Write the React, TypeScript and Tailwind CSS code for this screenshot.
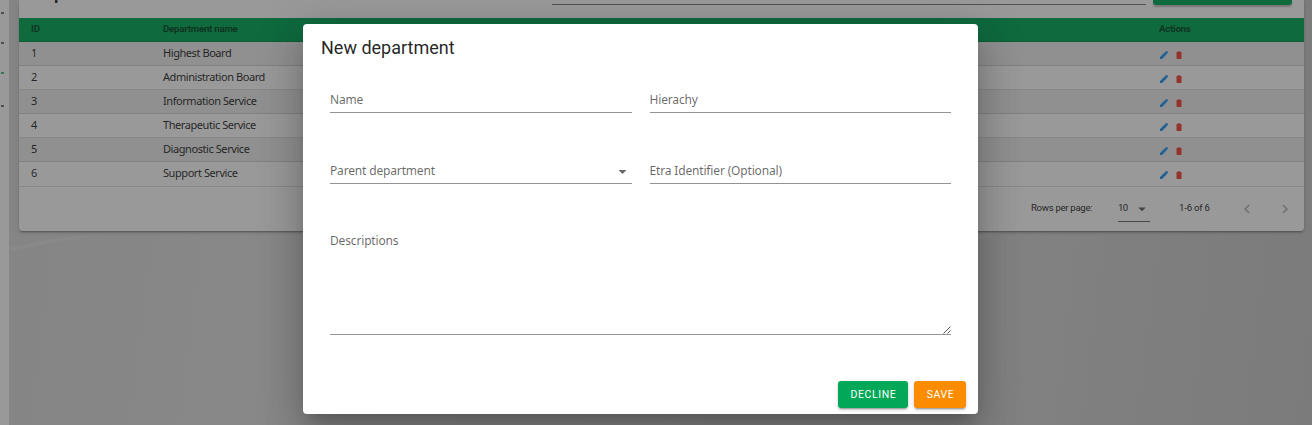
import React from "react";

const departments = [
  "Highest Board",
  "Administration Board",
  "Information Service",
  "Therapeutic Service",
  "Diagnostic Service",
  "Support Service",
];

function Icon({ d, className }: { d: string; className: string }) {
  return (
    <svg viewBox="0 0 24 24" className={className} fill="currentColor" aria-hidden="true">
      <path d={d} />
    </svg>
  );
}

const PENCIL =
  "M21.2,7.3C22,6.5 22,5.4 21.2,4.7L19.3,2.8C18.5,2 17.4,2 16.7,2.8L14.9,4.6L19.4,9.1M2.5,16.8V21.5H7.2L19.1,9.5L14.5,4.9L2.5,16.8Z";
const TRASH = "M18,4.5H15L14.2,3H9.8L9,4.5H6V6.4H18M6,6.6V19.6A2,2 0 0,0 8,21.4H16A2,2 0 0,0 18,19.6V6.6H6Z";
const LEFT = "M15.41,16.58L10.83,12L15.41,7.41L14,6L8,12L14,18L15.41,16.58Z";
const RIGHT = "M8.59,16.58L13.17,12L8.59,7.41L10,6L16,12L10,18L8.59,16.58Z";
const DOWN = "M7,10L12,15L17,10H7Z";

function Sidebar() {
  return (
    <div className="h-full w-[9px] shrink-0 bg-white pt-[12px]">
      <div className="ml-px h-[2px] w-[3px] bg-[#777]" />
      <div className="ml-px mt-[28px] h-[2px] w-[3px] bg-[#777]" />
      <div className="ml-px mt-[28px] h-[2px] w-[3px] bg-[#4dbf88]" />
      <div className="ml-px mt-[31px] h-[2px] w-[3px] bg-[#777]" />
    </div>
  );
}

function Toolbar() {
  return (
    <div className="flex h-[18px] items-start overflow-hidden">
      <div className="ml-[11px] mt-[-21px] w-[522px] font-['Roboto',sans-serif] text-[20px] leading-[26px] font-medium text-black/87">
        Departments
      </div>
      <div className="h-[5px] w-[594px] border-b border-black/50" />
      <div className="ml-[7px] h-[5px] w-[139px] rounded-b-[3px] bg-[#00a857] shadow-[0_2px_2px_rgba(0,0,0,0.25)]" />
    </div>
  );
}

function DepartmentTable() {
  return (
    <div>
      <div className="flex h-[24px] items-center border-b border-black/12 bg-[#00a857] pb-px font-['Roboto',sans-serif] text-[9.8px] font-bold text-black/60">
        <div className="w-[132px] pl-[12px]">ID</div>
        <div className="w-[996px] pl-[12px] tracking-[-0.3px]">Department name</div>
        <div className="pl-[12px] tracking-[-0.3px]">Actions</div>
      </div>
      {departments.map((name, i) => (
        <div
          key={name}
          className={
            "flex items-center border-b border-black/12 text-[11px] text-black/87 " +
            (i % 2 === 0 ? "bg-[#eeeeee] " : "bg-white ") +
            (i === 5 ? "h-[25px] pb-px" : "h-[24px]")
          }
        >
          <div className={"w-[132px] pl-[12px] tracking-[-0.4px] " + (i === 5 ? "-mt-px" : "")}>{i + 1}</div>
          <div className={"w-[996px] pl-[12px] tracking-[-0.43px] " + (i === 5 ? "-mt-px" : "")}>{name}</div>
          <div className="flex items-center pl-[11.5px] pt-[2px]">
            <Icon d={PENCIL} className="size-[10px] text-[#2196f3]" />
            <Icon d={TRASH} className="ml-[5px] size-[10px] text-[#f44336]" />
          </div>
        </div>
      ))}
    </div>
  );
}

function Pagination() {
  return (
    <div className="flex h-[44px] items-start pl-[1012px] pt-[14px] font-['Roboto',sans-serif] text-[9.6px] leading-[14px] text-black/87">
      <div className="w-[87px] tracking-[-0.3px]">Rows per page:</div>
      <div className="flex h-[21px] w-[32px] justify-between border-b border-black/60">
        <span className="tracking-[-0.7px]">10</span>
        <Icon d={DOWN} className="-mr-[1px] -mt-px size-[18px] text-black/60" />
      </div>
      <div className="ml-[29px] w-[59px] tracking-[-0.2px]">1-6 of 6</div>
      <Icon d={LEFT} className="-mt-px size-[18px] text-black/30" />
      <Icon d={RIGHT} className="-mt-px ml-[19.5px] size-[18px] text-black/30" />
    </div>
  );
}

function Field({ label, select }: { label: string; select?: boolean }) {
  return (
    <div className="flex h-[25px] flex-1 items-start justify-between border-b border-black/42 text-[12px] leading-[24px] tracking-[-0.16px] text-black/60">
      <span>{label}</span>
      {select && <Icon d={DOWN} className="mt-[3px] size-[19px] text-black/60" />}
    </div>
  );
}

function DepartmentDialog() {
  return (
    <div className="flex h-[390px] w-[675px] flex-col rounded-[4px] bg-white shadow-[0_11px_15px_-7px_rgba(0,0,0,0.2),0_24px_38px_3px_rgba(0,0,0,0.14),0_9px_46px_8px_rgba(0,0,0,0.12)]">
      <h2 className="h-[64px] pl-[18px] pt-[10px] font-['Roboto',sans-serif] text-[18px] leading-[28px] text-black/87">
        New department
      </h2>
      <div className="flex gap-[18px] px-[27px]">
        <Field label="Name" />
        <Field label="Hierachy" />
      </div>
      <div className="mt-[46px] flex gap-[18px] px-[27px]">
        <Field label="Parent department" select />
        <Field label="Etra Identifier (Optional)" />
      </div>
      <div className="mx-[27px] mt-[45px] flex h-[106px] items-start justify-between border-b border-black/42 text-[12px] leading-[24px] tracking-[-0.16px] text-black/60">
        <span>Descriptions</span>
        <svg viewBox="0 0 8 8" className="size-[8px] self-end" stroke="#555" strokeWidth="1">
          <path d="M0.5 7.5L7.5 0.5M4.5 7.5L7.5 4.5" fill="none" />
        </svg>
      </div>
      <div className="mt-[46px] flex justify-end gap-[6px] pr-[12px] font-['Roboto',sans-serif] text-[10.5px] leading-[27px] text-white">
        <button className="h-[27px] w-[70px] rounded-[3px] bg-[#00a857] pl-px tracking-[0.6px] shadow-[0_3px_1px_-2px_rgba(0,0,0,0.2),0_2px_2px_rgba(0,0,0,0.14),0_1px_5px_rgba(0,0,0,0.12)]">
          DECLINE
        </button>
        <button className="h-[27px] w-[52px] rounded-[3px] bg-[#fb8c00] pl-px tracking-[0.5px] shadow-[0_3px_1px_-2px_rgba(0,0,0,0.2),0_2px_2px_rgba(0,0,0,0.14),0_1px_5px_rgba(0,0,0,0.12)]">
          SAVE
        </button>
      </div>
    </div>
  );
}

function LightStreaks() {
  return (
    <svg className="absolute inset-0 blur-[1px]" width="1312" height="425" fill="none" aria-hidden="true">
      <path d="M10 251L50 243L105 233L50 240L10 248Z" fill="#fff" fillOpacity="0.3" />
      <path d="M970 242L1006 231H970Z" fill="#fff" fillOpacity="0.2" />
    </svg>
  );
}

export default function App() {
  return (
    <div className="relative h-[425px] w-[1312px] overflow-hidden font-['Noto_Sans',sans-serif]">
      <div className="flex h-full">
        <Sidebar />
        <main className="h-full flex-1 bg-[linear-gradient(97deg,#dadada_0%,#e0e0e0_22%,#d6d6d6_72%,#c8c8c8_100%)] pl-[10px]">
          <LightStreaks />
          <div className="relative h-[231px] w-[1285px] rounded-b-[4px] bg-white shadow-[0_3px_1px_-2px_rgba(0,0,0,0.2),0_2px_2px_rgba(0,0,0,0.14),0_1px_5px_rgba(0,0,0,0.12)]">
            <Toolbar />
            <DepartmentTable />
            <Pagination />
          </div>
        </main>
      </div>
      <div className="absolute inset-0 bg-[#212121]/46 pl-[303px] pt-[24px]">
        <DepartmentDialog />
      </div>
    </div>
  );
}
